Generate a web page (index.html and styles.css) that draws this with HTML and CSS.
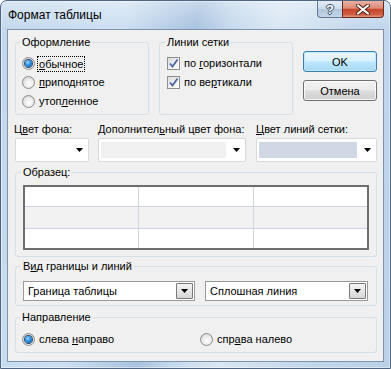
FILE: index.html
```html
<!DOCTYPE html>
<html lang="ru">
<head>
<meta charset="utf-8">
<title>Формат таблицы</title>
<link rel="stylesheet" href="styles.css">
</head>
<body>
<div class="window">
  <div class="titlebar">
    <div class="title">Формат таблицы</div>
    <div class="caption-buttons">
      <div class="cap-btn help">?</div>
      <div class="cap-btn close">
        <svg width="14" height="11" viewBox="0 0 14 11"><path d="M2 1.5 L12 9.5 M12 1.5 L2 9.5" stroke="#4a1c12" stroke-width="4" stroke-linecap="round" fill="none"/><path d="M2 1.5 L12 9.5 M12 1.5 L2 9.5" stroke="#fff" stroke-width="2.2" stroke-linecap="round" fill="none"/></svg>
      </div>
    </div>
  </div>
  <div class="client">
    <div class="top-row">
      <fieldset class="group effect">
        <legend>Оформление</legend>
        <div class="opt"><span class="radio on"></span><span class="focus"><u>о</u>бычное</span></div>
        <div class="opt"><span class="radio"></span><span class="opt-text"><u>п</u>риподнятое</span></div>
        <div class="opt"><span class="radio"></span><span class="opt-text">утоп<u>л</u>енное</span></div>
      </fieldset>
      <fieldset class="group gridlines">
        <legend>Линии сетки</legend>
        <div class="opt"><span class="check"><svg width="11" height="11" viewBox="0 0 11 11"><path d="M2 5.5 L4.5 8.5 L9.5 1.5" stroke="#4b67a3" stroke-width="1.8" fill="none"/></svg></span><span class="opt-text">по <u>г</u>оризонтали</span></div>
        <div class="opt"><span class="check"><svg width="11" height="11" viewBox="0 0 11 11"><path d="M2 5.5 L4.5 8.5 L9.5 1.5" stroke="#4b67a3" stroke-width="1.8" fill="none"/></svg></span><span class="opt-text">по ве<u>р</u>тикали</span></div>
      </fieldset>
      <div class="buttons">
        <button class="btn default">OK</button>
        <button class="btn">Отмена</button>
      </div>
    </div>

    <div class="colors">
      <div class="color-col c1">
        <div class="label l1">Ц<u>в</u>ет фона:</div>
        <div class="color-combo"><span class="swatch sw-white"></span><span class="drop"><svg width="7" height="4" viewBox="0 0 7 4"><path d="M0 0H7L3.5 4Z"/></svg></span></div>
      </div>
      <div class="color-col c2">
        <div class="label">Дополнител<u>ь</u>ный цвет фона:</div>
        <div class="color-combo"><span class="swatch sw-gray"></span><span class="drop"><svg width="7" height="4" viewBox="0 0 7 4"><path d="M0 0H7L3.5 4Z"/></svg></span></div>
      </div>
      <div class="color-col c3">
        <div class="label"><u>Ц</u>вет линий сетки:</div>
        <div class="color-combo"><span class="swatch sw-blue"></span><span class="drop"><svg width="7" height="4" viewBox="0 0 7 4"><path d="M0 0H7L3.5 4Z"/></svg></span></div>
      </div>
    </div>

    <fieldset class="group sample">
      <legend>Образец:</legend>
      <div class="sample-grid">
        <div class="cell"></div><div class="cell"></div><div class="cell"></div>
        <div class="cell alt"></div><div class="cell alt"></div><div class="cell alt"></div>
        <div class="cell"></div><div class="cell"></div><div class="cell"></div>
      </div>
    </fieldset>

    <fieldset class="group borders">
      <legend>В<u>и</u>д границы и линий</legend>
      <div class="combo-row">
        <div class="combo cb1"><span class="value">Граница таблицы</span><span class="combo-btn"><svg width="7" height="4" viewBox="0 0 7 4"><path d="M0 0H7L3.5 4Z"/></svg></span></div>
        <div class="combo cb2"><span class="value">Сплошная линия</span><span class="combo-btn"><svg width="7" height="4" viewBox="0 0 7 4"><path d="M0 0H7L3.5 4Z"/></svg></span></div>
      </div>
    </fieldset>

    <fieldset class="group direction">
      <legend>Направление</legend>
      <div class="dir-row">
        <div class="opt"><span class="radio on"></span><span class="opt-text">слева <u>н</u>аправо</span></div>
        <div class="opt"><span class="radio"></span><span class="opt-text">спр<u>а</u>ва налево</span></div>
      </div>
    </fieldset>
  </div>
</div>
</body>
</html>
```

FILE: styles.css
```css
* { box-sizing: border-box; }
html, body { margin: 0; padding: 0; }
body {
  width: 391px;
  height: 369px;
  overflow: hidden;
  background: #ffffff;
  font-family: "Liberation Sans", Arial, sans-serif;
}

.window {
  width: 391px;
  height: 369px;
  border: 1px solid #4f6682;
  border-radius: 7px 7px 0 0;
  display: flex;
  flex-direction: column;
  background:
    linear-gradient(to bottom, rgba(255,255,255,0.35), rgba(255,255,255,0) 28px),
    linear-gradient(100deg, #c3d8ed 0%, #cde0f2 28%, #a8c2df 44%, #c6daee 52%, #dae7f4 62%, #c4d8ec 80%, #b9d0e8 100%);
  box-shadow: inset 0 0 0 1px rgba(255,255,255,0.45);
}

.titlebar {
  height: 28px;
  flex: none;
  display: flex;
  justify-content: space-between;
  align-items: flex-start;
  padding: 0 6px 0 7px;
}
.title {
  font-size: 12px;
  line-height: 16px;
  padding-top: 6px;
  color: #000;
}
.caption-buttons {
  display: flex;
  height: 17px;
}
.cap-btn {
  height: 17px;
  display: flex;
  align-items: center;
  justify-content: center;
}
.help {
  width: 25px;
  border: 1px solid #66788f;
  border-top: none;
  border-right: none;
  border-radius: 0 0 0 4px;
  background: linear-gradient(to bottom, #e4ecf5 0%, #ccdaea 48%, #b0c4dc 52%, #c6d7ea 100%);
  color: #fff;
  font-weight: bold;
  font-size: 13px;
  line-height: 15px;
  text-shadow: 1px 0 0 #3b4a5e, -1px 0 0 #3b4a5e, 0 1px 0 #3b4a5e, 0 -1px 0 #3b4a5e;
}
.close {
  width: 42px;
  border: 1px solid #6b2a1e;
  border-top: none;
  border-radius: 0 0 4px 0;
  background: linear-gradient(to bottom, #eab0a2 0%, #dc8c78 45%, #c7462c 52%, #cf5e45 85%, #e49a84 100%);
}

.client {
  flex: 1;
  margin: 0 6px 6px 6px;
  border: 1px solid #7e93ac;
  background: #f0f0f0;
  padding: 6px 6px 0 7px;
  font-size: 11px;
  line-height: 13px;
  color: #000;
}

u { text-decoration: underline; text-underline-offset: 1px; }

.group {
  margin: 0;
  min-width: 0;
  border: 1px solid #d5dfe5;
  border-radius: 3px;
}
.group legend {
  padding: 0 2px;
  margin-left: -2px;
  line-height: 13px;
}

.top-row {
  display: flex;
  align-items: stretch;
  gap: 10px;
}
.effect {
  width: 134px;
  padding: 5px 6px 3px 6px;
}
.gridlines {
  width: 134px;
  padding: 5px 6px 3px 7px;
}
.opt {
  height: 19px;
  display: flex;
  align-items: center;
}
.opt-text { margin-left: 4px; }
.focus {
  margin-left: 3px;
  padding: 0 1px;
  outline: 1px dotted #000;
  line-height: 14px;
}

.radio {
  width: 13px;
  height: 13px;
  flex: none;
  border-radius: 50%;
  border: 1px solid #8c8c8c;
  background: radial-gradient(circle at 55% 60%, #ffffff 0%, #ececec 45%, #c8c8c8 100%);
  display: flex;
  align-items: center;
  justify-content: center;
}
.radio.on::after {
  content: "";
  width: 7px;
  height: 7px;
  border-radius: 50%;
  background: radial-gradient(circle at 40% 35%, #a6dcff 0%, #2f93e4 40%, #0b4d96 100%);
  box-shadow: 0 0 0 1px #25466f;
}

.check {
  width: 13px;
  height: 13px;
  flex: none;
  border: 1px solid #8e8f8f;
  background: linear-gradient(135deg, #dcdcdc 0%, #f2f2f2 60%, #ffffff 100%);
  display: flex;
  align-items: center;
  justify-content: center;
}

.buttons {
  display: flex;
  flex-direction: column;
  gap: 8px;
  padding-top: 15px;
}
.btn {
  width: 74px;
  height: 21px;
  margin: 0;
  padding: 0;
  border: 1px solid #707070;
  border-radius: 3px;
  background: linear-gradient(to bottom, #f2f2f2 0%, #ebebeb 48%, #dddddd 52%, #cfcfcf 100%);
  font-family: "Liberation Sans", Arial, sans-serif;
  font-size: 11px;
  color: #000;
  box-shadow: inset 0 0 0 1px rgba(255,255,255,0.8);
}
.btn.default {
  border-color: #3c7fb1;
  background: linear-gradient(to bottom, #eaf6fd 0%, #d9f0fc 48%, #bee6fd 52%, #a7d9f5 100%);
  box-shadow: inset 0 0 0 1px #bfe6fb;
}

.colors {
  display: flex;
  margin-top: 8px;
}
.color-col { display: flex; flex-direction: column; }
.c1 { width: 74px; margin-right: 9px; }
.c2 { width: 148px; margin-right: 10px; }
.c3 { width: 121px; }
.label {
  line-height: 13px;
  margin-bottom: 2px;
  white-space: nowrap;
}
.l1 { margin-left: -1px; }
.color-combo {
  height: 24px;
  border: 1px solid #d9d9d9;
  border-radius: 2px;
  background: #ffffff;
  display: flex;
  padding: 3px 0 3px 2px;
}
.swatch { flex: 1; margin-right: 2px; }
.sw-white { background: #ffffff; }
.sw-gray { background: #f0f0f0; }
.sw-blue { background: #d0d7e5; }
.drop {
  width: 17px;
  flex: none;
  display: flex;
  align-items: center;
  justify-content: center;
}

.sample {
  margin-top: 4px;
  padding: 6px 7px 6px 7px;
}
.sample-grid {
  display: grid;
  grid-template-columns: 113px 114px 113px;
  grid-template-rows: 19px 21px 19px;
  gap: 1px;
  border: 2px solid #6e6e6e;
  background: #cdd4df;
  width: 346px;
}
.cell { background: #ffffff; }
.cell.alt { background: #f2f2f2; }

.borders {
  margin-top: 3px;
  padding: 8px 7px 4px 7px;
}
.combo-row {
  display: flex;
  gap: 10px;
}
.combo {
  height: 20px;
  border: 1px solid #9a9a9a;
  background: #ffffff;
  display: flex;
  align-items: center;
  justify-content: space-between;
}
.cb1 { width: 172px; }
.cb2 { width: 163px; }
.value { padding-left: 4px; }
.combo-btn {
  width: 17px;
  height: 16px;
  margin-right: 1px;
  border: 1px solid #7a7a7a;
  border-radius: 1px;
  background: linear-gradient(to bottom, #f4f4f4 0%, #e6e6e6 50%, #d5d5d5 100%);
  display: flex;
  align-items: center;
  justify-content: center;
}

.direction {
  margin-top: 5px;
  padding: 6px 6px 3px 6px;
}
.dir-row {
  display: grid;
  grid-template-columns: 178px 1fr;
}
```
